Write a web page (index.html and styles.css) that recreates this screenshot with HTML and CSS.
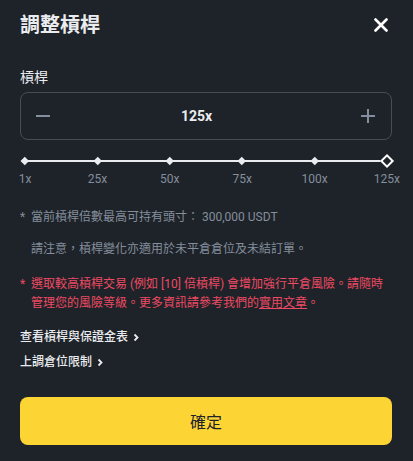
FILE: index.html
```html
<!DOCTYPE html>
<html lang="zh-Hant">
<head>
    <meta charset="UTF-8">
    <meta name="viewport" content="width=device-width, initial-scale=1.0">
    <title>調整槓桿</title>
    <link rel="stylesheet" href="styles.css">
</head>
<body>
    <div class="modal">
        <div class="modal-header">
            <h2>調整槓桿</h2>
            <button class="close-btn" aria-label="close">
                <svg width="14" height="14" viewBox="0 0 14 14"><path d="M1.5 1.5l11 11M12.5 1.5l-11 11" stroke="#fff" stroke-width="2.6" stroke-linecap="round"/></svg>
            </button>
        </div>

        <div class="field-label">槓桿</div>
        <div class="stepper">
            <button class="step-btn" aria-label="minus">
                <svg width="16" height="16" viewBox="0 0 16 16"><path d="M1 8h14" stroke="#848e9c" stroke-width="2"/></svg>
            </button>
            <div class="stepper-value">125x</div>
            <button class="step-btn" aria-label="plus">
                <svg width="16" height="16" viewBox="0 0 16 16"><path d="M1 8h14M8 1v14" stroke="#848e9c" stroke-width="2"/></svg>
            </button>
        </div>

        <div class="slider">
            <div class="stop"><span class="dot"></span><span class="mark">1x</span></div>
            <div class="stop"><span class="dot"></span><span class="mark">25x</span></div>
            <div class="stop"><span class="dot"></span><span class="mark">50x</span></div>
            <div class="stop"><span class="dot"></span><span class="mark">75x</span></div>
            <div class="stop"><span class="dot"></span><span class="mark">100x</span></div>
            <div class="stop"><span class="dot handle"></span><span class="mark">125x</span></div>
        </div>

        <div class="note note-first"><span class="star">*</span><span>當前槓桿倍數最高可持有頭寸： 300,000 USDT</span></div>
        <div class="note note-plain"><span class="star"></span><span>請注意，槓桿變化亦適用於未平倉倉位及未結訂單。</span></div>
        <div class="note note-warn"><span class="star">*</span><p>選取較高槓桿交易 (例如 [10] 倍槓桿) 會增加強行平倉風險。請隨時管理您的風險等級。更多資訊請參考我們的<a href="#">實用文章</a>。</p></div>

        <a class="link link-first" href="#">查看槓桿與保證金表
            <svg width="8" height="9" viewBox="0 0 8 9"><path d="M2.5 1.5l3 3-3 3" fill="none" stroke="#eaecef" stroke-width="1.8"/></svg>
        </a>
        <a class="link" href="#">上調倉位限制
            <svg width="8" height="9" viewBox="0 0 8 9"><path d="M2.5 1.5l3 3-3 3" fill="none" stroke="#eaecef" stroke-width="1.8"/></svg>
        </a>

        <button class="confirm-btn">確定</button>
    </div>
</body>
</html>
```

FILE: styles.css
```css
body {
    margin: 0;
    padding: 0;
    background-color: #1e2329;
    font-family: Roboto, "Noto Sans CJK TC", sans-serif;
    color: #eaecef;
}

.modal {
    padding: 11px 21px 0 20px;
}

.modal-header {
    display: flex;
    justify-content: space-between;
    align-items: center;
    height: 28px;
}
.modal-header h2 {
    margin: 0;
    font-size: 20px;
    line-height: 28px;
    font-weight: 700;
}
.close-btn {
    background: none;
    border: none;
    padding: 0;
    margin-right: 4px;
    display: flex;
    cursor: pointer;
}

.field-label {
    margin-top: 28px;
    font-size: 14px;
    line-height: 20px;
}

.stepper {
    margin-top: 5px;
    height: 48px;
    box-sizing: border-box;
    border: 1px solid #474d57;
    border-radius: 8px;
    display: flex;
    align-items: center;
    padding: 0 15px 0 14px;
}
.step-btn {
    background: none;
    border: none;
    padding: 0;
    display: flex;
    cursor: pointer;
}
.stepper-value {
    flex: 1;
    text-align: center;
    padding-right: 18px;
    font-size: 14px;
    font-weight: 700;
}

.slider {
    position: relative;
    display: flex;
    justify-content: space-between;
    margin: 15px -7px 0 -7px;
}
.slider::before {
    content: "";
    position: absolute;
    left: 12px;
    right: 12px;
    top: 5px;
    height: 2px;
    background: #eaecef;
}
.stop {
    width: 24px;
    display: flex;
    flex-direction: column;
    align-items: center;
    position: relative;
}
.dot {
    width: 12px;
    height: 12px;
    display: flex;
    align-items: center;
    justify-content: center;
}
.dot::after {
    content: "";
    width: 5.5px;
    height: 5.5px;
    background: #eaecef;
    transform: rotate(45deg);
}
.dot.handle::after {
    width: 10px;
    height: 10px;
    box-sizing: border-box;
    background: #1e2329;
    border: 2px solid #fff;
}
.mark {
    margin-top: 4px;
    font-size: 12px;
    line-height: 16px;
    color: #848e9c;
    white-space: nowrap;
}

.note {
    display: flex;
    font-size: 12px;
    line-height: 18px;
    color: #848e9c;
}
.note p {
    margin: 0;
}
.star {
    width: 11px;
    flex-shrink: 0;
}
.note-first { margin-top: 21px; }
.note-plain { margin-top: 14px; }
.note-warn {
    margin-top: 17px;
    line-height: 19px;
    color: #ee4a63;
}
.note-warn a {
    color: #ee4a63;
    text-decoration: underline;
}

.link {
    display: flex;
    align-items: center;
    gap: 4px;
    margin-top: 7px;
    font-size: 12px;
    line-height: 18px;
    font-weight: 500;
    color: #eaecef;
    text-decoration: none;
}
.link-first { margin-top: 15px; }

.confirm-btn {
    display: block;
    width: 100%;
    height: 48px;
    margin-top: 26px;
    border: none;
    border-radius: 8px;
    background-color: #fcd535;
    color: #1e2329;
    font-family: Roboto, "Noto Sans CJK TC", sans-serif;
    font-size: 16px;
    font-weight: 400;
    cursor: pointer;
}
```
